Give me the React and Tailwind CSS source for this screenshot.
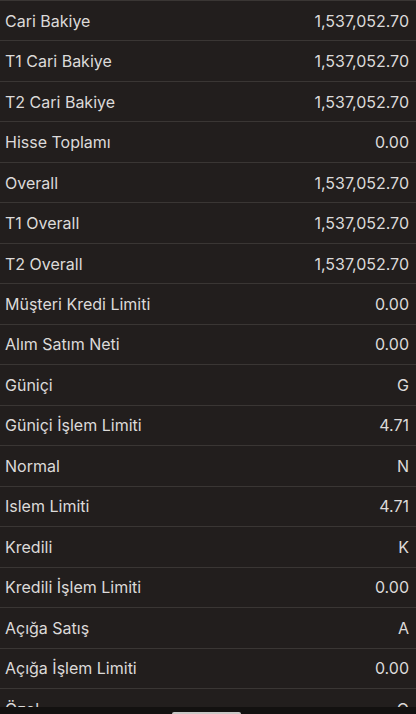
import React from 'react';

const rows = [
    ['Cari Bakiye', '1,537,052.70'],
    ['T1 Cari Bakiye', '1,537,052.70'],
    ['T2 Cari Bakiye', '1,537,052.70'],
    ['Hisse Toplamı', '0.00'],
    ['Overall', '1,537,052.70'],
    ['T1 Overall', '1,537,052.70'],
    ['T2 Overall', '1,537,052.70'],
    ['Müşteri Kredi Limiti', '0.00'],
    ['Alım Satım Neti', '0.00'],
    ['Güniçi', 'G'],
    ['Güniçi İşlem Limiti', '4.71'],
    ['Normal', 'N'],
    ['Islem Limiti', '4.71'],
    ['Kredili', 'K'],
    ['Kredili İşlem Limiti', '0.00'],
    ['Açığa Satış', 'A'],
    ['Açığa İşlem Limiti', '0.00'],
    ['Özel', 'O'],
];

const App = () => {
    return (
        <div className="relative h-[714px] w-full overflow-hidden bg-[#221e1d] font-['Inter',sans-serif] text-[16px] text-[#dcdad9]">
            {rows.map(([label, value]) => (
                <div
                    key={label}
                    className="flex h-[40.47px] items-center justify-between border-t border-[#3a3634] pl-[5px] pr-[7px]"
                >
                    <span>{label}</span>
                    <span>{value}</span>
                </div>
            ))}
            <div className="absolute bottom-0 left-0 right-0 h-[7px] bg-[#131110]">
                <div className="absolute bottom-0 left-[172px] h-[2px] w-[69px] rounded-t-sm bg-[#c9c8c6]" />
            </div>
        </div>
    );
};

export default App;
